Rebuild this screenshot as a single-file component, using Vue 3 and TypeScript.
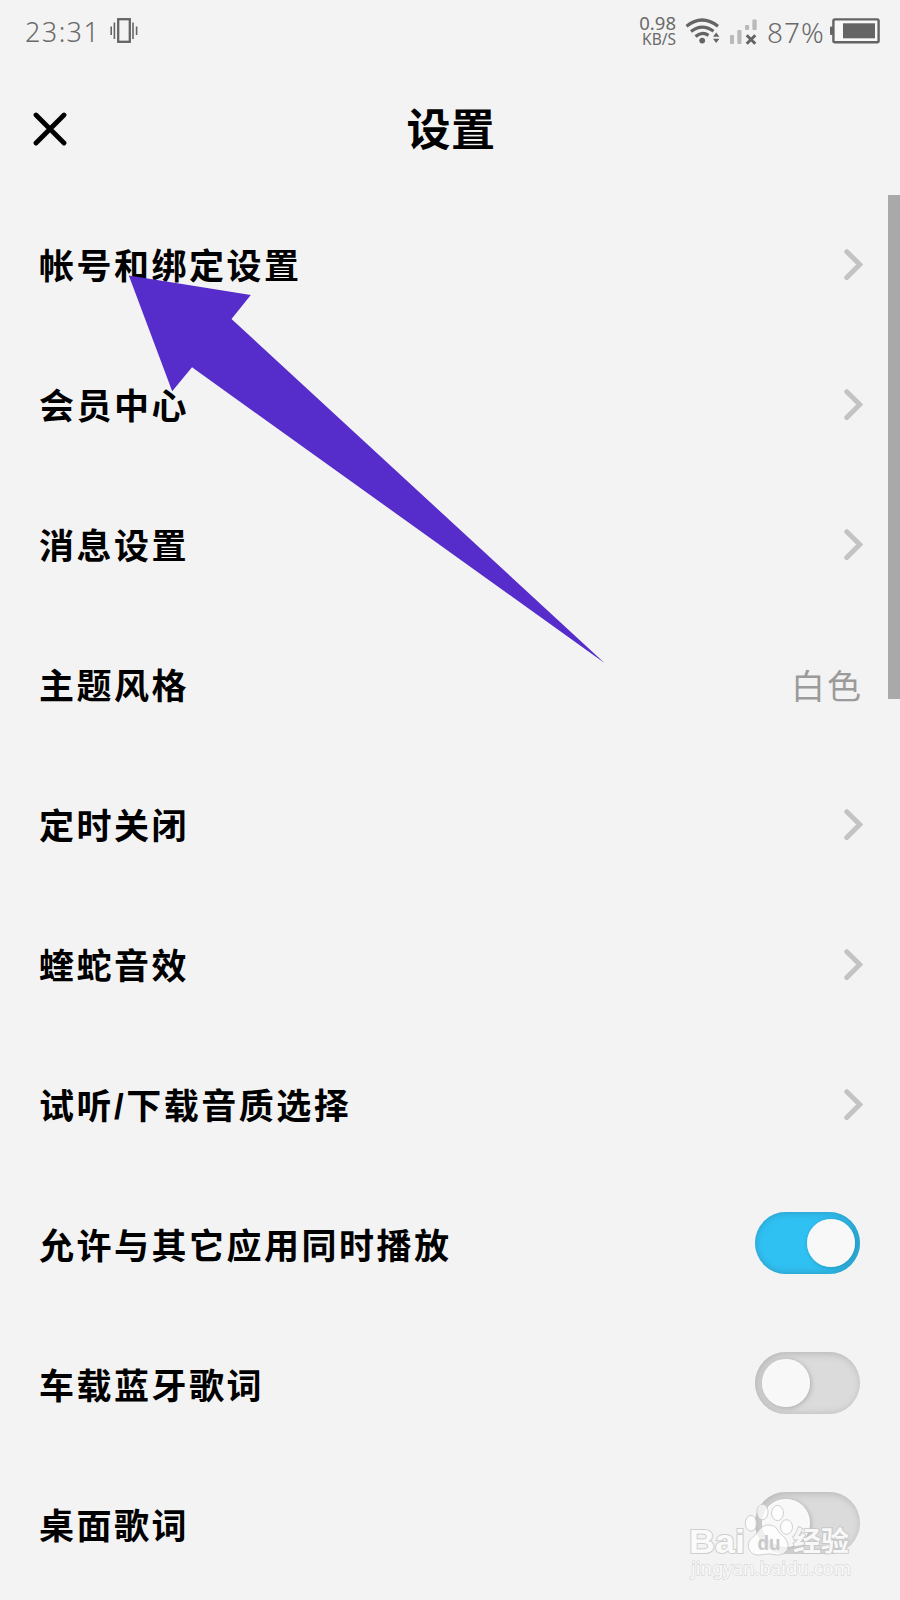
<script setup lang="ts">
type RowKind = 'link' | 'value' | 'toggle'

interface SettingRow {
  label: string
  kind: RowKind
  value?: string
  on?: boolean
}

const rows: SettingRow[] = [
  { label: '帐号和绑定设置', kind: 'link' },
  { label: '会员中心', kind: 'link' },
  { label: '消息设置', kind: 'link' },
  { label: '主题风格', kind: 'value', value: '白色' },
  { label: '定时关闭', kind: 'link' },
  { label: '蝰蛇音效', kind: 'link' },
  { label: '试听/下载音质选择', kind: 'link' },
  { label: '允许与其它应用同时播放', kind: 'toggle', on: true },
  { label: '车载蓝牙歌词', kind: 'toggle', on: false },
  { label: '桌面歌词', kind: 'toggle', on: false },
]
</script>

<template>
  <div class="screen">
    <header class="status">
      <div class="status-left">
        <span class="clock">23:31</span>
        <svg class="vibrate" width="28" height="26" viewBox="0 0 28 26" fill="none" stroke="#646464">
          <rect x="8.2" y="1.2" width="11.6" height="22.6" stroke-width="2.3" />
          <path d="M4.4 4.5v16.5M23 4.5v16.5M1.2 8.5v8.5M26.6 8.5v8.5" stroke-width="1.6" />
        </svg>
      </div>
      <div class="status-right">
        <div class="speed"><span>0.98</span><span>KB/S</span></div>
        <svg class="wifi" width="36" height="27" viewBox="0 0 36 27" fill="none" stroke="#646464">
          <path d="M1.5 8.2Q17 -4.2 33 8.2M6 13.5Q17 4.8 28.5 13.2M10.5 18.5Q17 13 23.5 17.3" stroke-width="3.2" />
          <circle cx="17.2" cy="22.6" r="2.9" fill="#646464" stroke="none" />
          <path d="M28 18.8l3.2-4.3 3.2 4.3zM28 20.7l3.2 4.3 3.2-4.3z" fill="#646464" stroke="none" />
        </svg>
        <svg class="signal" width="28" height="27" viewBox="0 0 28 27">
          <g fill="#b9b9b9">
            <rect x="0" y="17" width="4" height="9" rx="1" />
            <rect x="7.3" y="12" width="4.2" height="14" rx="1" />
            <rect x="15" y="7" width="4.2" height="5" rx="1" />
            <rect x="22.4" y="1.5" width="4.3" height="10.5" rx="1" />
          </g>
          <path d="M16.7 17.2l8.6 8.6M25.3 17.2l-8.6 8.6" stroke="#646464" stroke-width="2.9" />
        </svg>
        <span class="percent">87%</span>
        <svg class="battery" width="50" height="26" viewBox="0 0 50 26">
          <rect x="3.4" y="1.4" width="45.2" height="22.8" rx="1.5" fill="#f8f8f8" stroke="#646464" stroke-width="2.4" />
          <rect x="0" y="8.5" width="3" height="8.5" rx="1" fill="#646464" />
          <rect x="13" y="5.3" width="32" height="15" fill="#646464" />
        </svg>
      </div>
    </header>

    <div class="titlebar">
      <svg class="close" width="34" height="34" viewBox="0 0 34 34" fill="none" stroke="#000" stroke-width="4.8" stroke-linecap="round">
        <path d="M3 3l28 28M31 3L3 31" />
      </svg>
      <h1>设置</h1>
    </div>

    <main class="list">
      <div v-for="row in rows" :key="row.label" class="row">
        <span class="label">{{ row.label }}</span>
        <svg v-if="row.kind === 'link'" class="chevron" width="19" height="32" viewBox="0 0 19 32" fill="none" stroke="#c3c3c3" stroke-width="5" stroke-linecap="round">
          <path d="M2.8 2.7L15.8 15.5L2.8 28.5" />
        </svg>
        <span v-else-if="row.kind === 'value'" class="value">{{ row.value }}</span>
        <span v-else class="toggle" :class="{ on: row.on }"><i class="knob" /></span>
      </div>
    </main>

    <div class="scrollbar" />

    <svg class="arrow" width="480" height="392" viewBox="0 0 480 392">
      <path d="M0.8 0.5L122.8 20L103.5 44L476.5 388L64 92.3L44.2 116.3Z" fill="#562ccb" />
    </svg>

    <svg class="watermark" width="180" height="90" viewBox="0 0 180 90">
      <g fill="#fff" fill-opacity=".72" stroke="#c4c4c4" stroke-opacity=".8" stroke-width="1">
        <ellipse cx="71" cy="23.3" rx="5.7" ry="7.8" />
        <ellipse cx="82.5" cy="12" rx="5.6" ry="7.8" />
        <ellipse cx="97.5" cy="13" rx="6" ry="7.6" />
        <ellipse cx="106.5" cy="27" rx="6" ry="7.3" />
        <path d="M88 25C80 25 78 34 71.5 38.5C65 44 69 55 77.5 55C84 55 88 53 94 54.5C104 57 110 50 107.5 42C105 36 99 34 97 29C95 26 92 25 88 25Z" />
        <g class="wm-strong" paint-order="stroke" fill-opacity="1" stroke-width="2">
          <text class="wm-bai" x="9" y="53" font-size="34" textLength="56" lengthAdjust="spacingAndGlyphs" fill="#fafafa">Bai</text>
          <text x="113" y="50.5" font-size="27" textLength="56" lengthAdjust="spacingAndGlyphs" fill="#f8f8f8">经验</text>
        </g>
        <text class="wm-url" x="11" y="75" font-size="18" textLength="160" lengthAdjust="spacingAndGlyphs" paint-order="stroke" fill="#fafafa" fill-opacity="1" stroke="#d2d2d2" stroke-width="1.4">jingyan.baidu.com</text>
      </g>
      <text class="wm-du" x="77.5" y="50" font-size="20" textLength="23" lengthAdjust="spacingAndGlyphs" fill="#c8c8c8">du</text>
    </svg>
  </div>
</template>

<style>
html,
body {
  margin: 0;
  background: #f3f3f3;
}
</style>

<style scoped>
.screen {
  position: relative;
  display: flex;
  flex-direction: column;
  width: 900px;
  height: 1600px;
  overflow: hidden;
  background: #f3f3f3;
  color: #000;
  font-family: 'Liberation Sans', 'Noto Sans CJK SC', sans-serif;
}

.status {
  display: flex;
  justify-content: space-between;
  box-sizing: border-box;
  height: 62px;
  padding: 0 20px 0 25px;
  color: #6a6a6a;
  font-family: 'Noto Sans', sans-serif;
  font-weight: 300;
}

.status-left,
.status-right {
  display: flex;
  align-items: center;
  height: 62px;
}

.clock {
  width: 85px;
  padding-top: 1px;
  font-size: 27px;
  letter-spacing: 1.4px;
  white-space: nowrap;
}

.speed {
  display: flex;
  flex-direction: column;
  align-items: flex-end;
  width: 40px;
  margin-right: 9px;
  font-size: 18.5px;
  font-weight: 400;
  line-height: 17px;
}

.speed span:last-child {
  font-size: 15.5px;
}

.signal {
  margin-left: 9px;
}

.percent {
  width: 62px;
  margin: 0 1px 0 9px;
  padding-top: 1px;
  font-size: 28px;
  letter-spacing: 1px;
  white-space: nowrap;
}

.titlebar {
  display: grid;
  grid-template-columns: 67px 1fr 67px;
  align-items: center;
  height: 133px;
}

.close {
  margin-left: 33px;
}

h1 {
  margin: 0;
  padding: 4px 0 0 2px;
  font-size: 44px;
  font-weight: 700;
  letter-spacing: 0.5px;
  line-height: 60px;
  text-align: center;
}

.list {
  display: flex;
  flex-direction: column;
}

.row {
  display: flex;
  flex: 0 0 140px;
  align-items: center;
  justify-content: space-between;
  box-sizing: border-box;
  padding: 0 37px 0 39px;
}

.label {
  padding-top: 4px;
  font-size: 35px;
  font-weight: 700;
  letter-spacing: 2.5px;
  line-height: 48px;
  white-space: nowrap;
}

.value {
  padding-bottom: 2px;
  color: #9b9b9b;
  font-size: 34px;
  letter-spacing: 2px;
}

.toggle {
  display: flex;
  align-items: center;
  box-sizing: border-box;
  width: 105px;
  height: 62px;
  margin: 0 3px 4px 0;
  padding: 0 5px 0 7px;
  border-radius: 31px;
  background: #dbdbdb;
  box-shadow: inset 2px 1px 8px #b0b0b0;
}

.toggle.on {
  justify-content: flex-end;
  background: #30c1f3;
  box-shadow: inset -1px 0 8px #2b93ba;
}

.knob {
  width: 48px;
  height: 48px;
  border-radius: 50%;
  background: #f8f8f8;
  box-shadow: 1px 1px 5px rgba(0, 0, 0, 0.22), inset 0 0 3px #fff;
}

.scrollbar {
  position: absolute;
  top: 195px;
  right: 0;
  width: 12.5px;
  height: 504px;
  background: #a9a9a9;
}

.arrow {
  position: absolute;
  top: 275px;
  left: 128px;
}

.watermark {
  position: absolute;
  top: 1500px;
  left: 680px;
}

.wm-strong {
  font-family: 'Liberation Sans', 'Noto Sans CJK SC', sans-serif;
  font-weight: 700;
}

.wm-url {
  font-family: 'Noto Sans', sans-serif;
}

.wm-du {
  font-family: 'Liberation Sans', sans-serif;
  font-weight: 700;
}
</style>
